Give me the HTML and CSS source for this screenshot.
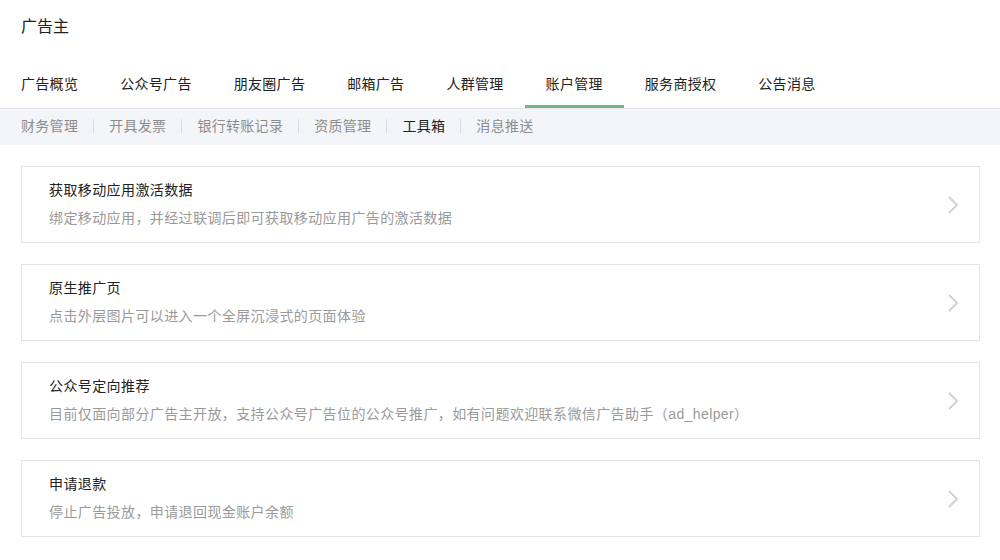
FILE: index.html
```html
<!DOCTYPE html>
<html lang="zh-CN">
<head>
  <meta charset="UTF-8">
  <title>广告主 - 工具箱</title>
  <link rel="stylesheet" href="styles.css">
</head>
<body>

  <!-- 页头 -->
  <div class="page-title">广告主</div>

  <!-- 主导航 -->
  <ul class="main-nav">
    <li>广告概览</li>
    <li>公众号广告</li>
    <li>朋友圈广告</li>
    <li>邮箱广告</li>
    <li>人群管理</li>
    <li class="current">账户管理</li>
    <li>服务商授权</li>
    <li>公告消息</li>
  </ul>

  <!-- 子导航 -->
  <ul class="sub-nav">
    <li>财务管理</li>
    <li>开具发票</li>
    <li>银行转账记录</li>
    <li>资质管理</li>
    <li class="current">工具箱</li>
    <li>消息推送</li>
  </ul>

  <!-- 工具列表 -->
  <div class="tool-list">
    <a class="tool-item" href="#">
      <div class="tool-info">
        <h3>获取移动应用激活数据</h3>
        <p>绑定移动应用，并经过联调后即可获取移动应用广告的激活数据</p>
      </div>
      <svg class="arrow" width="14" height="20" viewBox="0 0 14 20"><path d="M3 2 L11 10 L3 18" fill="none" stroke="#d2d2d2" stroke-width="2"/></svg>
    </a>
    <a class="tool-item" href="#">
      <div class="tool-info">
        <h3>原生推广页</h3>
        <p>点击外层图片可以进入一个全屏沉浸式的页面体验</p>
      </div>
      <svg class="arrow" width="14" height="20" viewBox="0 0 14 20"><path d="M3 2 L11 10 L3 18" fill="none" stroke="#d2d2d2" stroke-width="2"/></svg>
    </a>
    <a class="tool-item" href="#">
      <div class="tool-info">
        <h3>公众号定向推荐</h3>
        <p>目前仅面向部分广告主开放，支持公众号广告位的公众号推广，如有问题欢迎联系微信广告助手（ad_helper）</p>
      </div>
      <svg class="arrow" width="14" height="20" viewBox="0 0 14 20"><path d="M3 2 L11 10 L3 18" fill="none" stroke="#d2d2d2" stroke-width="2"/></svg>
    </a>
    <a class="tool-item" href="#">
      <div class="tool-info">
        <h3>申请退款</h3>
        <p>停止广告投放，申请退回现金账户余额</p>
      </div>
      <svg class="arrow" width="14" height="20" viewBox="0 0 14 20"><path d="M3 2 L11 10 L3 18" fill="none" stroke="#d2d2d2" stroke-width="2"/></svg>
    </a>
  </div>

</body>
</html>
```

FILE: styles.css
```css
/* === 页面基本样式 === */
body {
  margin: 0;
  font-family: "Liberation Sans", "Noto Sans CJK SC", sans-serif;
  font-size: 14px;
  color: #353535;
  background: #fff;
}
ul {
  list-style: none;
  margin: 0;
  padding: 0;
}
a {
  color: inherit;
  text-decoration: none;
}

/* === 页头 === */
.page-title {
  padding: 15px 21px 0;
  height: 41px;
  line-height: 24px;
  font-size: 16px;
  color: #222;
}

/* === 主导航 === */
.main-nav {
  display: flex;
  margin-top: 4px;
}
.main-nav li {
  padding: 0 21px;
  height: 45px;
  line-height: 48px;
  letter-spacing: 0.3px;
  color: #222;
  border-bottom: 3px solid transparent;
}
.main-nav li.current {
  border-bottom-color: #7ab38a;
}

/* === 子导航 === */
.sub-nav {
  display: flex;
  align-items: center;
  height: 33px;
  padding: 0 21px 3px;
  background: #f4f5f9;
  border-top: 1px solid #e4e6ea;
}
.sub-nav li {
  color: #8d8d8d;
  letter-spacing: 0.3px;
  line-height: 20px;
}
.sub-nav li + li {
  margin-left: 15px;
  padding-left: 15px;
  border-left: 1px solid #dcdcdc;
  line-height: 14px;
}
.sub-nav li.current {
  color: #222;
}

/* === 工具列表 === */
.tool-list {
  display: flex;
  flex-direction: column;
  gap: 21px;
  padding: 21px 20px 0 21px;
}
.tool-item {
  display: flex;
  align-items: center;
  height: 75px;
  padding: 0 19px 0 27px;
  border: 1px solid #e4e4e4;
}
.tool-info {
  flex: 1;
  letter-spacing: 0.4px;
}
.tool-info h3 {
  margin: -2px 0 0;
  font-size: 14px;
  font-weight: normal;
  line-height: 20px;
  color: #222;
}
.tool-info p {
  margin: 8px 0 0;
  font-size: 14px;
  line-height: 20px;
  color: #9a9a9a;
}
.arrow {
  flex: none;
}
```
